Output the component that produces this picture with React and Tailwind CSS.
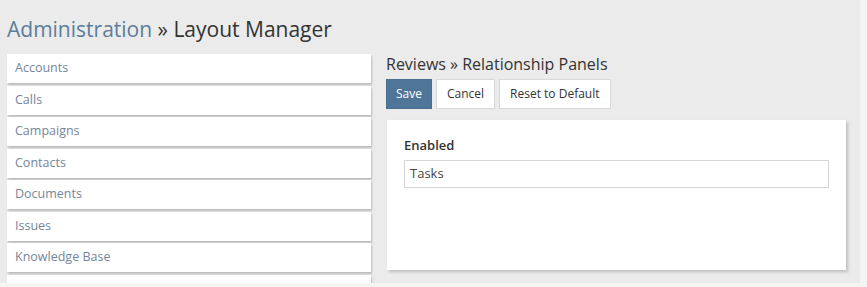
import React from 'react';

const modules = [
  'Accounts',
  'Calls',
  'Campaigns',
  'Contacts',
  'Documents',
  'Issues',
  'Knowledge Base',
  '',
];

const font = { fontFamily: '"Open Sans", "Liberation Sans", sans-serif' };

const ModuleList = () => (
  <div className="w-[364px] shrink-0 flex flex-col gap-[2.5px]">
    {modules.map((name, i) => (
      <div
        key={i}
        className="h-[29px] bg-white flex items-center pl-[8px] text-[12.5px] text-[#74869a] shadow-[1px_2px_2px_rgba(0,0,0,0.2)]"
      >
        {name}
      </div>
    ))}
  </div>
);

const Toolbar = () => (
  <div className="flex gap-[4px] mt-[5px]">
    <button className="h-[30px] px-[9px] bg-[#4f7699] text-white text-[12px] border border-[#4a6f90]">
      Save
    </button>
    <button className="h-[30px] px-[10px] bg-white text-[#333] text-[12px] border border-[#d8d8d8]">
      Cancel
    </button>
    <button className="h-[30px] px-[10px] bg-white text-[#333] text-[12px] border border-[#d8d8d8]">
      Reset to Default
    </button>
  </div>
);

export default function App() {
  return (
    <div className="w-[867px] h-[287px] overflow-hidden bg-[#f4f4f4]" style={font}>
      <div className="w-[860px] h-[283px] bg-[#ebebeb] overflow-hidden pl-[7px]">
        <h1 className="text-[21px] leading-[28px] pt-[15px] h-[54px] text-[#333]">
          <span className="text-[#5d7d99]">Administration</span> » Layout Manager
        </h1>
        <div className="flex gap-[15px]">
          <ModuleList />
          <div className="w-[460px]">
            <div className="text-[16px] leading-[20px] text-[#333]">
              Reviews » Relationship Panels
            </div>
            <Toolbar />
            <div className="mt-[11px] ml-[1px] h-[150px] bg-white shadow-[2px_2px_3px_rgba(0,0,0,0.2)] px-[17px] pt-[16px]">
              <div className="text-[13px] font-semibold text-[#333] leading-[18px]">Enabled</div>
              <div className="mt-[6px] h-[28px] border border-[#d6d6d6] flex items-center pl-[5px] text-[13px] text-[#444]">
                Tasks
              </div>
            </div>
          </div>
        </div>
      </div>
    </div>
  );
}
